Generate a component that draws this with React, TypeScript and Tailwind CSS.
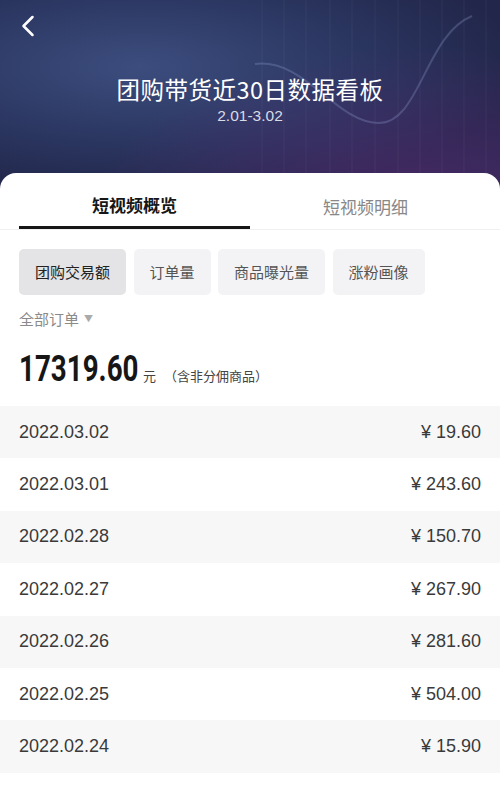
import React from 'react';
import { ChevronLeft } from 'lucide-react';

const chips = ['团购交易额', '订单量', '商品曝光量', '涨粉画像'];

const rows = [
  { date: '2022.03.02', amount: '19.60' },
  { date: '2022.03.01', amount: '243.60' },
  { date: '2022.02.28', amount: '150.70' },
  { date: '2022.02.27', amount: '267.90' },
  { date: '2022.02.26', amount: '281.60' },
  { date: '2022.02.25', amount: '504.00' },
  { date: '2022.02.24', amount: '15.90' },
];

const font = "font-['Noto_Sans_CJK_SC','Noto_Sans',sans-serif]";

function HeaderDecor() {
  const lines = [262, 284, 306, 330, 352, 375, 398, 420, 442, 464, 486];
  return (
    <svg className="absolute inset-0 h-full w-full pointer-events-none" viewBox="0 0 500 190" preserveAspectRatio="none">
      {lines.map((x) => (
        <line key={x} x1={x} y1="0" x2={x} y2="190" stroke="rgba(255,255,255,0.05)" strokeWidth="1" />
      ))}
      <path
        d="M255 64 C 305 58, 335 122, 378 123 C 420 124, 425 35, 472 16"
        fill="none"
        stroke="rgba(150,165,215,0.28)"
        strokeWidth="2"
      />
    </svg>
  );
}

export default function App() {
  return (
    <div className={`w-[500px] h-[789px] overflow-hidden bg-white ${font}`}>
      {/* Header */}
      <div className="relative h-[190px] bg-[radial-gradient(ellipse_at_28%_35%,#3c4d7e_0%,#2a355f_45%,#22264a_75%)]">
        <div className="absolute inset-0 bg-[radial-gradient(ellipse_at_85%_110%,rgba(110,45,130,0.5)_0%,transparent_55%)]" />
        <HeaderDecor />
        <div className="relative flex flex-col">
          <div className="pl-[10px] pt-[8px] h-[42px]">
            <ChevronLeft className="w-[36px] h-[36px] text-white" strokeWidth={1.7} />
          </div>
          <div className="mt-[31px] text-center text-white text-[23.5px] leading-[32px] tracking-[0.5px]">
            团购带货近30日数据看板
          </div>
          <div className="mt-[2px] text-center text-[#d8dbe6] text-[15.5px] leading-[18px] font-['Liberation_Sans',sans-serif]">2.01-3.02</div>
        </div>
      </div>

      {/* Card */}
      <div className="relative -mt-[17px] rounded-t-[16px] bg-white">
        <div className="flex px-[19px] border-b border-[#f0f0f0]">
          <div className="w-[231px] h-[56px] flex flex-col items-center justify-end">
            <div className="text-[17px] font-bold text-[#161616] leading-[24px] mb-[9px]">短视频概览</div>
            <div className="h-[3px] w-full bg-[#161616]" />
          </div>
          <div className="flex-1 h-[56px] flex items-start justify-center pt-[22px]">
            <div className="text-[17px] text-[#888] leading-[24px]">短视频明细</div>
          </div>
        </div>

        <div className="flex gap-[7.5px] px-[19px] pt-[19px]">
          {chips.map((c, i) => (
            <div
              key={c}
              className={`h-[46px] flex items-center rounded-[5px] text-[15px] px-[16px] ${
                i === 0 ? 'bg-[#e4e4e6] text-[#222]' : 'bg-[#f3f3f5] text-[#555]'
              }`}
            >
              {c}
            </div>
          ))}
        </div>

        <div className="px-[19px] pt-[13px] flex items-center text-[15px] text-[#8a8a8a] leading-[22px]">
          全部订单
          <span className="ml-[5px] text-[9px] text-[#aaa]">▼</span>
        </div>

        <div className="px-[19px] pt-[19px] flex items-baseline">
          <span className="inline-block w-[118px] whitespace-nowrap">
            <span className="inline-block origin-left scale-x-[0.75] text-[37px] font-bold text-[#161616] leading-[40px] font-['Roboto',sans-serif]">
              17319.60
            </span>
          </span>
          <span className="ml-[6px] text-[13px] text-[#444]">元</span>
          <span className="ml-[8px] text-[13px] text-[#444]">（含非分佣商品）</span>
        </div>

        <div className="mt-[17px] flex flex-col">
          {rows.map((r, i) => (
            <div
              key={r.date}
              className={`h-[52.4px] flex items-center justify-between px-[19px] text-[18px] text-[#3a3a3a] font-['Liberation_Sans',sans-serif] ${
                i % 2 === 0 ? 'bg-[#f7f7f8]' : 'bg-white'
              }`}
            >
              <span>{r.date}</span>
              <span>¥ {r.amount}</span>
            </div>
          ))}
        </div>
      </div>
    </div>
  );
}
